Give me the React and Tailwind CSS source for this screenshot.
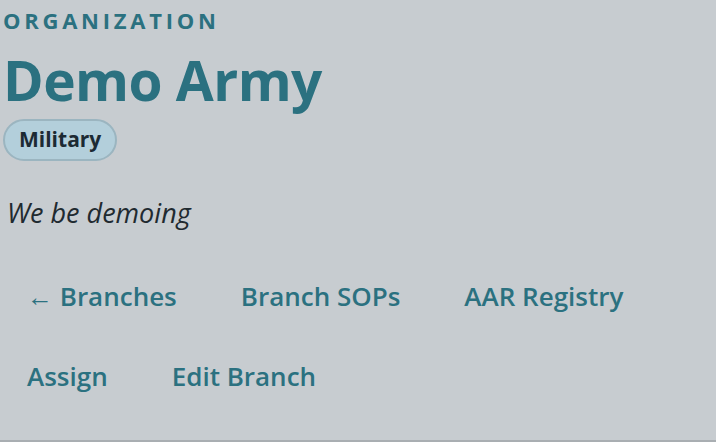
export default function App() {
  const font = { fontFamily: '"Open Sans", "Noto Sans", sans-serif' };
  return (
    <div className="min-h-[442px] w-[716px] bg-[#c7ccd0] overflow-hidden" style={font}>
      <div className="pl-[3px] pt-[6px] border-b-2 border-[#a9aeb2] h-[442px] flex flex-col">
        <div className="text-[22px] leading-[28px] font-bold tracking-[0.17em] text-[#2b7180]">ORGANIZATION</div>
        <h1 className="mt-[12px] text-[55px] leading-[68px] font-bold text-[#2b7180] tracking-[-0.01em]">Demo Army</h1>
        <div className="mt-[5px]">
          <span className="inline-flex items-center h-[42px] px-[14px] rounded-full bg-[#b3cfdb] border-2 border-[#9bb5c0] text-[21px] font-bold text-[#1c2a33]">Military</span>
        </div>
        <p className="mt-[34px] ml-[4px] text-[27px] leading-[36px] italic text-[#1f2a30]">We be demoing</p>
        <nav className="mt-[25px] flex flex-wrap gap-x-4">
          {["← Branches", "Branch SOPs", "AAR Registry", "Assign", "Edit Branch"].map((t) => (
            <a key={t} className="px-6 h-[80px] flex items-center text-[26px] font-semibold text-[#2b7180]">{t}</a>
          ))}
        </nav>
      </div>
    </div>
  );
}
